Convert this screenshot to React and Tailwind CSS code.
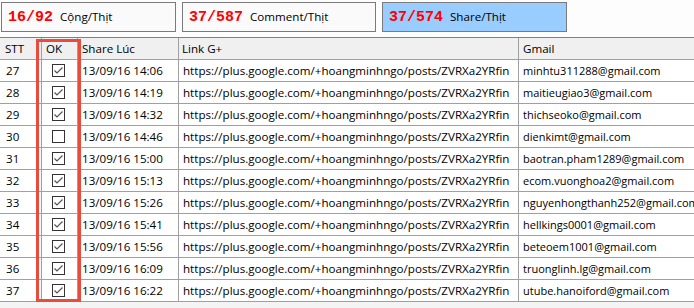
import React from "react";

const rows = [
  ["27", true, "13/09/16 14:06", "minhtu311288@gmail.com"],
  ["28", true, "13/09/16 14:19", "maitieugiao3@gmail.com"],
  ["29", true, "13/09/16 14:32", "thichseoko@gmail.com"],
  ["30", false, "13/09/16 14:46", "dienkimt@gmail.com"],
  ["31", true, "13/09/16 15:00", "baotran.pham1289@gmail.com"],
  ["32", true, "13/09/16 15:13", "ecom.vuonghoa2@gmail.com"],
  ["33", true, "13/09/16 15:26", "nguyenhongthanh252@gmail.com"],
  ["34", true, "13/09/16 15:41", "hellkings0001@gmail.com"],
  ["35", true, "13/09/16 15:56", "beteoem1001@gmail.com"],
  ["36", true, "13/09/16 16:09", "truonglinh.lg@gmail.com"],
  ["37", true, "13/09/16 16:22", "utube.hanoiford@gmail.com"],
];

const LINK = "https://plus.google.com/+hoangminhngo/posts/ZVRXa2YRfin";

function Check({ checked }) {
  return (
    <div className="w-[13px] h-[13px] border border-[#333333] bg-white flex items-center justify-center">
      {checked && (
        <svg width="11" height="11" viewBox="0 0 11 11">
          <path d="M1.5 5.5 L4 8 L9.5 2.5" fill="none" stroke="#555" strokeWidth="1.2" />
        </svg>
      )}
    </div>
  );
}

function Box({ num, label, blue }) {
  return (
    <div
      className={`h-[30px] flex items-center pl-[6px] border border-[#7a7a7a] ${
        blue ? "bg-[#99ccff] w-[185px]" : "bg-[#fafafa]"
      }`}
    >
      <span className="text-[15px] font-bold text-[#ff0000] font-['Liberation_Mono',monospace]">{num}</span>
      <span className="ml-[7px] text-[11.6px] text-black">{label}</span>
    </div>
  );
}

const cell = "h-full flex items-center border-r border-[#a0a0a0] whitespace-nowrap";

export default function App() {
  return (
    <div className="relative w-[694px] h-[308px] bg-[#f4f4f4] overflow-hidden font-['Segoe_UI','Open_Sans',sans-serif] text-[11.6px] text-black leading-none">
      <div className="h-[35px] bg-[#fdfdfd] flex items-start pt-[2px] pl-[1px] gap-[6px] border-b border-[#808080] box-content">
        <div className="w-[175px]"><Box num="16/92" label="Cộng/Thịt" /></div>
        <div className="w-[194px]"><Box num="37/587" label="Comment/Thịt" /></div>
        <Box num="37/574" label="Share/Thịt" blue />
      </div>
      <div className="flex flex-col">
        <div className="flex h-[22px] bg-[#f0f0f0] border-b border-[#a0a0a0]">
          <div className={`${cell} w-[42px] pl-[5px]`}>STT</div>
          <div className={`${cell} w-[36px] pl-[4px]`}>OK</div>
          <div className={`${cell} w-[101px] pl-[4px]`}>Share Lúc</div>
          <div className={`${cell} w-[340px] pl-[3px]`}>Link G+</div>
          <div className={`${cell} w-[175px] pl-[4px] border-r-0`}>Gmail</div>
        </div>
        {rows.map(([stt, ok, date, mail]) => (
          <div key={stt} className="flex h-[22px] bg-white border-b border-[#a0a0a0]">
            <div className={`${cell} w-[42px] pl-[6px]`}>{stt}</div>
            <div className={`${cell} w-[36px] justify-center pr-[3px]`}>
              <Check checked={ok} />
            </div>
            <div className={`${cell} w-[101px] pl-[4px]`}>{date}</div>
            <div className={`${cell} w-[340px] pl-[4px]`}>{LINK}</div>
            <div className={`${cell} w-[175px] pl-[4px] border-r-0 text-[11px]`}>{mail}</div>
          </div>
        ))}
      </div>
      <div className="absolute left-[36px] top-[39px] w-[45px] h-[263px] border-[3px] border-[#e74c3c]" />
    </div>
  );
}
